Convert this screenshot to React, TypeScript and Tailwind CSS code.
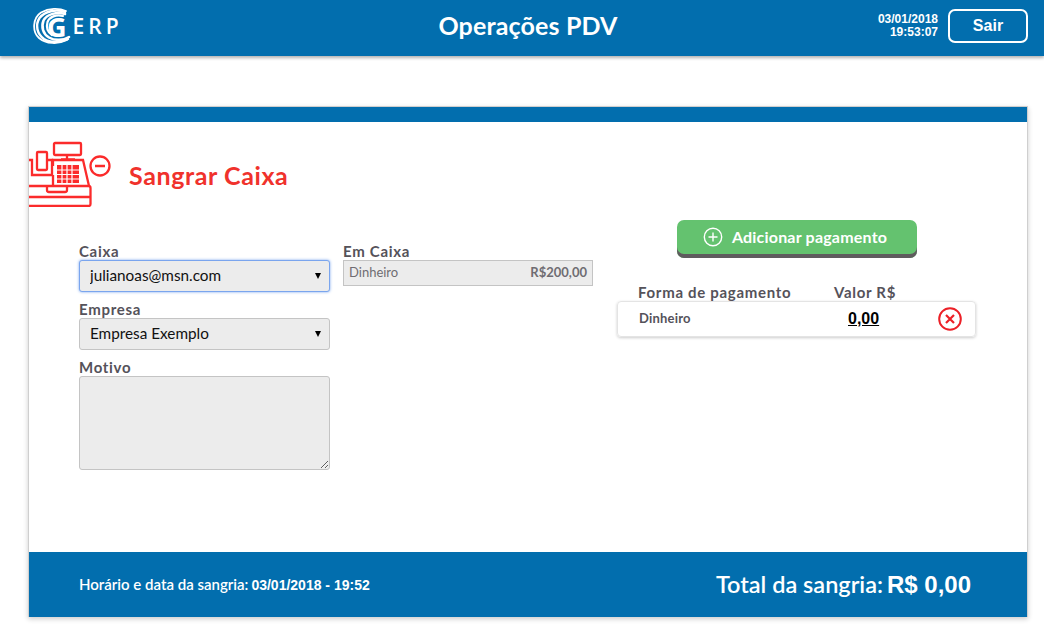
const raleway = "font-['Lato','Liberation_Sans',sans-serif]";
const labelClass = `${raleway} text-[15px] font-bold tracking-[0.7px] text-[#55525a]`;

function Logo() {
  return (
    <div className="flex items-center">
      <svg width="40" height="36" viewBox="0 0 40 36" fill="none" stroke="#fff" strokeLinecap="round" className="shrink-0">
        <path d="M34 3C27 0 17 0 9 4.500C0.500 10 0 24 7 30C14 36 26 36.500 35 32" strokeWidth="1.800" />
        <path d="M33 4C24 1 13 3 7.500 10C3 17 5 26 12 31C18 35 28 35 36 31" strokeWidth="2.400" />
        <path d="M33 6C25 3.500 15 6 11.500 12.500C9 19 11 26 17 29.500C23 33 31 32.500 37 29" strokeWidth="2.600" />
        <path d="M31 8C24 6 17.500 9 15.500 14C14 19.500 15.500 24 20 27" strokeWidth="2.200" />
      </svg>
      <span className="-ml-[25px] font-['Open_Sans',sans-serif] text-[27px] font-bold leading-none text-white">G</span>
      <span className="ml-[6px] font-['Open_Sans',sans-serif] text-[21px] font-semibold leading-none tracking-[4px] text-white">ERP</span>
    </div>
  );
}

function CashRegister() {
  return (
    <svg width="84" height="66" viewBox="0 0 84 66" fill="none" stroke="#fb2b2b" strokeWidth="2.300" className="shrink-0">
      <path d="M0 19H3V34H23V19H18" />
      <rect x="8" y="11" width="10" height="18" rx="1" />
      <rect x="25" y="2" width="27" height="12" rx="1" />
      <path d="M38 14V18M32 18.500H46" />
      <path d="M24 25V19H54L60 45M24 34V45" />
      <rect x="28" y="24" width="22" height="18" fill="#fb2b2b" stroke="none" />
      <path d="M28 29H50M28 33.500H50M28 38H50M33 24V42M38 24V42M43 24V42" stroke="#fff" strokeWidth="1.200" />
      <path d="M0 45H59.500A2 2 0 0 1 61.500 47V63A2 2 0 0 1 59.500 65H0" />
      <path d="M0 56H61.500M18 45V49A2 2 0 0 0 20 51H36A2 2 0 0 0 38 49V45" />
      <circle cx="71" cy="25" r="9.500" />
      <path d="M66 25H76" strokeWidth="2.500" />
    </svg>
  );
}

const fieldClass =
  "h-8 w-full appearance-none rounded-[3px] border bg-[#ececec] pb-px pl-[10px] text-[15.300px] text-[#111] font-['Lato',sans-serif] outline-none";

function SelectBox({ value, focused }: { value: string; focused?: boolean }) {
  return (
    <div className="relative">
      <select
        defaultValue={value}
        className={`${fieldClass} ${focused ? 'border-[#7aa5ee] shadow-[0_0_3px_#7aa5ee]' : 'border-[#c4c4c4]'}`}
      >
        <option>{value}</option>
      </select>
      {/* arrow over the select */}
      <span className="pointer-events-none absolute right-[9px] top-[13px] h-0 w-0 border-x-[3.500px] border-t-[6px] border-x-transparent border-t-black" />
    </div>
  );
}

export default function App() {
  return (
    <div className="h-[626px] w-[1044px] overflow-hidden bg-white">
      <header className="flex h-14 items-center justify-between bg-[#026eae] pb-1 pl-8 pr-4 shadow-[0_2px_3px_rgba(0,0,0,0.3)]">
        <div className="w-[250px]">
          <Logo />
        </div>
        <h1 className={`${raleway} mr-1 text-[25px] font-bold tracking-[0.15px] text-white`}>Operações PDV</h1>
        <div className="flex w-[250px] items-center justify-end gap-[10px]">
          <div className="text-right font-['Liberation_Sans',sans-serif] text-[12px] font-bold leading-[13px] text-white">
            <div>03/01/2018</div>
            <div>19:53:07</div>
          </div>
          <button className="h-[34px] w-[80px] rounded-[7px] border-2 border-white font-['Liberation_Sans',sans-serif] text-[16px] font-bold text-white">
            Sair
          </button>
        </div>
      </header>

      <main className="ml-7 mt-[50px] flex h-[511px] w-[1000px] flex-col border-x border-t border-[#cfcfcf] shadow-[0_2px_5px_rgba(0,0,0,0.2)]">
        <div className="h-[15px] bg-[#026eae]" />

        <div className="flex items-center pt-[19px]">
          <CashRegister />
          <h2 className={`${raleway} ml-4 mt-1 text-[25px] font-bold tracking-[0.6px] text-[#f0322c]`}>Sangrar Caixa</h2>
        </div>

        <div className="flex flex-1 pl-[50px] pt-[36px]">
          <div className="flex w-[251px] flex-col">
            <label className={`${labelClass} leading-[17px]`}>Caixa</label>
            <SelectBox value="julianoas@msn.com" focused />
            <label className={`${labelClass} mt-[9px] leading-[17px]`}>Empresa</label>
            <SelectBox value="Empresa Exemplo" />
            <label className={`${labelClass} mt-[9px] leading-[17px]`}>Motivo</label>
            <textarea className="h-[94px] w-full rounded-[3px] border border-[#c4c4c4] bg-[#ececec] outline-none" />
          </div>

          <div className="ml-[13px] flex w-[250px] flex-col">
            <label className={`${labelClass} leading-[17px]`}>Em Caixa</label>
            <div className={`${raleway} flex h-[26px] items-center justify-between border border-[#c4c4c4] bg-[#ececec] px-[5px] text-[13px] text-[#6f6c72]`}>
              <span>Dinheiro</span>
              <span className="font-bold">R$200,00</span>
            </div>
          </div>

          <div className="ml-6 flex w-[359px] flex-col">
            <button className={`${raleway} mx-auto -mt-[23px] flex h-[38px] w-[240px] items-center justify-center gap-[9px] rounded-[7px] bg-[#64c26f] pb-[4px] pr-[3px] text-[16px] font-bold tracking-[0.200px] text-white shadow-[inset_0_-4px_0_#5f5b5e]`}>
              <svg width="20" height="20" viewBox="0 0 20 20" fill="none" stroke="#fff" strokeWidth="1.400">
                <circle cx="10" cy="10" r="8.700" />
                <path d="M10 5.500V14.500M5.500 10H14.500" />
              </svg>
              Adicionar pagamento
            </button>
            <div className={`${labelClass} mt-[25px] flex leading-[18px]`}>
              <span className="ml-[21px] w-[196px]">Forma de pagamento</span>
              <span>Valor R$</span>
            </div>
            <div className="flex h-[36px] items-center rounded-[4px] border border-[#e4e4e4] shadow-[0_1px_3px_rgba(0,0,0,0.2)]">
              <span className={`${raleway} ml-[21px] w-[209px] text-[13px] font-bold tracking-[0.200px] text-[#55525a]`}>Dinheiro</span>
              <span className="w-[90px] font-['Liberation_Sans',sans-serif] text-[16px] font-bold text-black underline">0,00</span>
              <svg width="24" height="24" viewBox="0 0 24 24" fill="none" stroke="#ec2027" strokeWidth="2">
                <circle cx="12" cy="12" r="10.800" />
                <path d="M8 8L16 16M16 8L8 16" strokeWidth="2.200" />
              </svg>
            </div>
          </div>
        </div>

        <footer className="flex h-[65px] items-center justify-between bg-[#026eae] pl-[50px] pr-[56px] text-white">
          <div className={`${raleway} flex items-baseline gap-[3px] text-[15px] font-semibold`}>
            <span>Horário e data da sangria:</span>
            <span className="font-['Liberation_Sans',sans-serif] text-[14px] font-bold">03/01/2018 - 19:52</span>
          </div>
          <div className={`${raleway} flex items-baseline gap-[4px] text-[24px] font-semibold`}>
            <span className="text-[23.500px]">Total da sangria:</span>
            <span className="font-['Liberation_Sans',sans-serif] font-bold">R$ 0,00</span>
          </div>
        </footer>
      </main>
    </div>
  );
}
